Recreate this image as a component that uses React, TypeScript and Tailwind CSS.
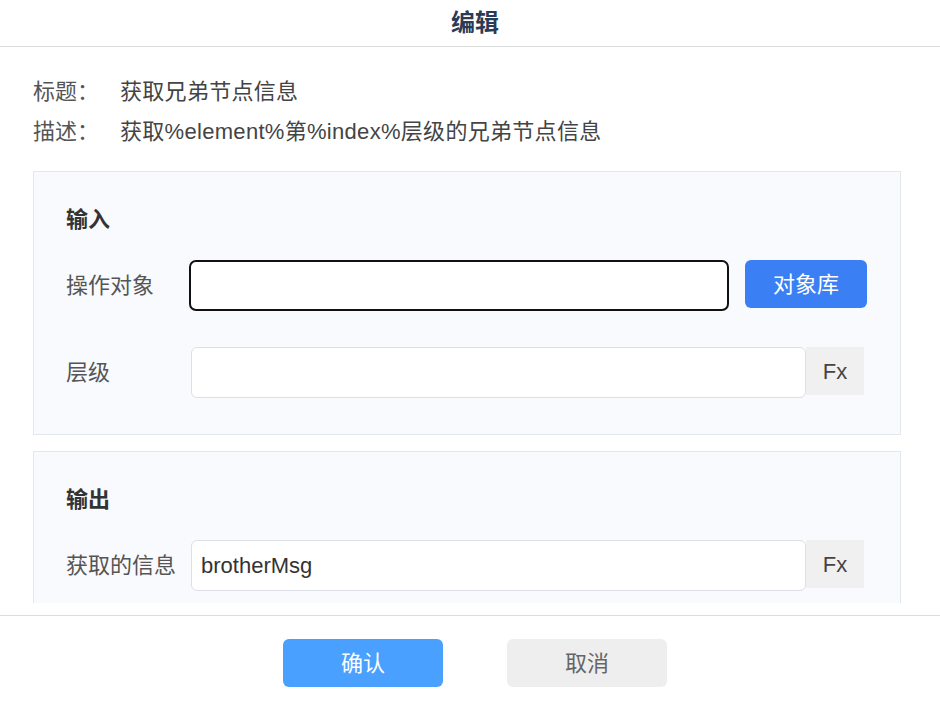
import React from "react";

const font = { fontFamily: '"Liberation Sans", "Noto Sans CJK SC", sans-serif' };

function Section({ title, children }: { title: string; children: React.ReactNode }) {
  return (
    <div className="bg-[#f9fafd] border border-[#e4e7ed] px-[32px] pt-[33px] pb-[36px]">
      <div className="h-[30px] leading-[30px] text-[22px] font-bold text-[#333]">{title}</div>
      <div className="mt-[25px] flex flex-col gap-[36px]">{children}</div>
    </div>
  );
}

function FxInput({ label, value }: { label: string; value?: string }) {
  return (
    <div className="flex items-start">
      <div className="w-[125px] h-[51px] flex items-center text-[22px] text-[#555]">{label}</div>
      <div className="w-[615px] h-[51px] bg-white border border-[#dcdfe6] rounded-[6px] flex items-center px-[9px] text-[22px] text-[#333]">
        {value}
      </div>
      <div className="w-[58px] h-[48px] bg-[#f0f0f0] flex items-center justify-center text-[22px] text-[#444]">Fx</div>
    </div>
  );
}

export default function App() {
  return (
    <div className="w-[940px] h-[702px] bg-white flex flex-col overflow-hidden" style={font}>
      {/* 头部 */}
      <div className="h-[47px] shrink-0 border-b border-[#dddddd] flex items-center justify-center pl-[10px]">
        <span className="text-[24px] font-bold text-[#2a3b55]">编辑</span>
      </div>

      {/* 内容 */}
      <div className="h-[556px] shrink-0 overflow-hidden pl-[33px] pr-[39px] pt-[24px]">
        <div className="flex h-[40px] items-center text-[22px] text-[#555]">
          <span className="w-[87px]">标题：</span>
          <span className="text-[#444] tracking-[0.3px]">获取兄弟节点信息</span>
        </div>
        <div className="flex h-[40px] items-center text-[22px] text-[#555]">
          <span className="w-[87px]">描述：</span>
          <span className="text-[#444] tracking-[0.3px]">获取%element%第%index%层级的兄弟节点信息</span>
        </div>

        <div className="mt-[20px] flex flex-col gap-[16px]">
          <Section title="输入">
            <div className="flex items-start">
              <div className="w-[123px] h-[51px] flex items-center text-[22px] text-[#555]">操作对象</div>
              <div className="w-[540px] h-[51px] bg-white border-2 border-[#111] rounded-[7px]"></div>
              <button className="ml-[16px] w-[122px] h-[48px] rounded-[6px] bg-[#3b7ff5] text-white text-[22px]">
                对象库
              </button>
            </div>
            <FxInput label="层级" />
          </Section>

          <Section title="输出">
            <FxInput label="获取的信息" value="brotherMsg" />
          </Section>
        </div>
      </div>

      {/* 底部 */}
      <div className="mt-[12px] flex-1 border-t border-[#dddddd] flex justify-center items-start pt-[23px] gap-[64px] pl-[10px]">
        <button className="w-[160px] h-[48px] rounded-[6px] bg-[#4aa0ff] text-white text-[22px]">确认</button>
        <button className="w-[160px] h-[48px] rounded-[6px] bg-[#eeeeee] text-[#666] text-[22px]">取消</button>
      </div>
    </div>
  );
}
